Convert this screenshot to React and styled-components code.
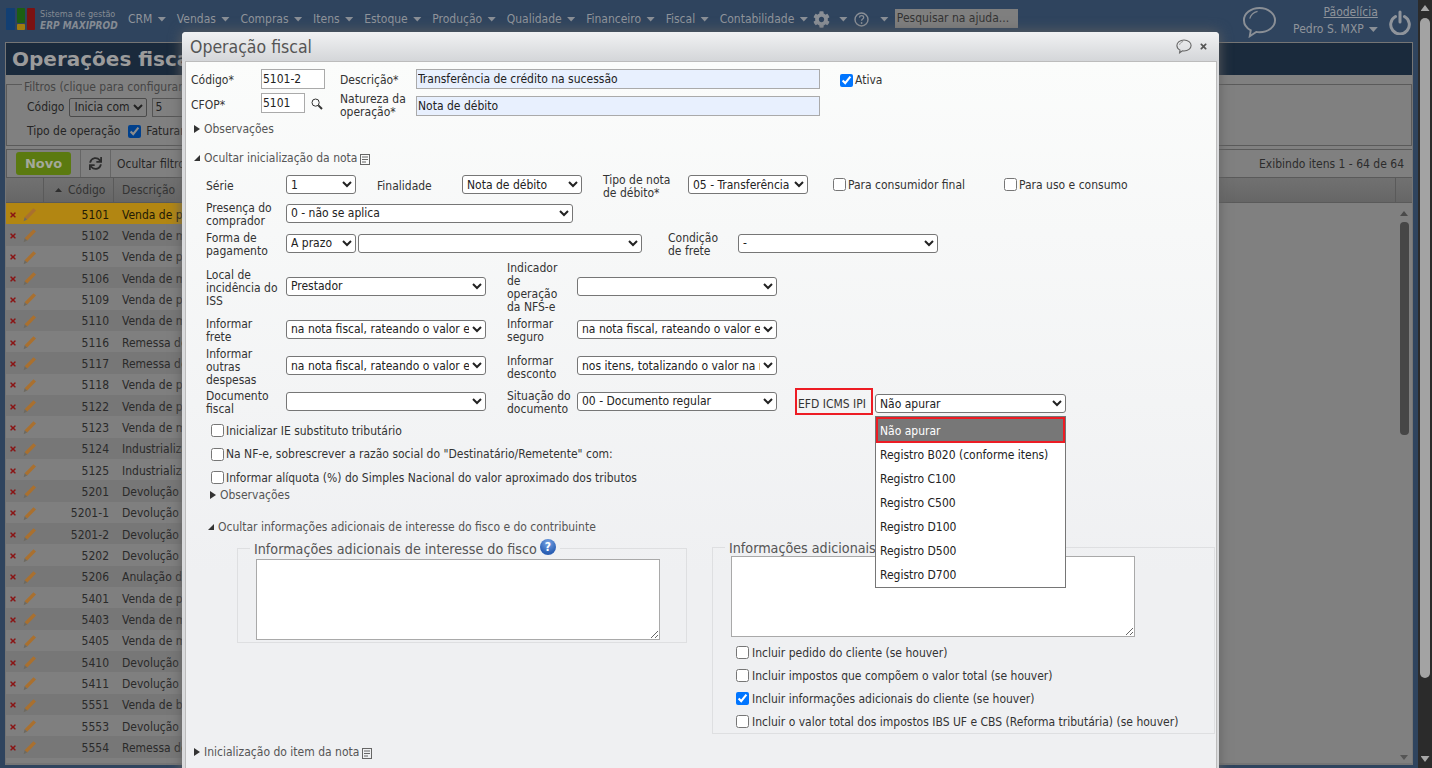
import React from 'react';
import styled, { createGlobalStyle } from 'styled-components';
import { FaCog, FaSync, FaTimes } from 'react-icons/fa';

const GlobalStyle = createGlobalStyle`
  html, body {
    margin: 0;
    height: 100%;
    overflow: hidden;
    background: #2f445e;
  }
  * { box-sizing: border-box; }
  body, input, select, textarea {
    font-family: "DejaVu Sans Condensed", "DejaVu Sans", sans-serif;
    font-stretch: condensed;
    font-size: 12px;
  }
`;

const Shell = styled.div`
  position: relative;
  width: 1432px;
  height: 768px;
  overflow: hidden;
  display: flex;
`;

const Main = styled.div`
  width: 1418px;
  display: flex;
  flex-direction: column;
`;

const PageScroll = styled.div`
  width: 14px;
  background: #2b2b2b;
  display: flex;
  flex-direction: column;
  align-items: center;
  padding: 5px 0 6px;
  .thumb {
    width: 10px;
    height: 660px;
    margin-top: 7px;
    border-radius: 5px;
    background: #a3a3a3;
  }
  .gap { flex: 1; }
`;

const Tri = styled.i`
  display: block;
  width: ${p => p.$w || 9}px;
  height: ${p => p.$h || 5}px;
  margin-left: ${p => p.$ml || 0}px;
  background: ${p => p.$c || '#8a8f96'};
  clip-path: ${p => (p.$up ? 'polygon(50% 0, 100% 100%, 0 100%)' : 'polygon(0 0, 100% 0, 50% 100%)')};
`;

/* top bar */
const Nav = styled.div`
  height: 42px;
  flex: none;
  display: flex;
  align-items: flex-start;
  color: #8f949b;
`;

const Brand = styled.div`
  width: 128px;
  height: 38px;
  padding: 8px 0 0 6px;
  display: flex;
  gap: 4px;
  flex: none;
`;

const BrandText = styled.div`
  color: #858b93;
  font-size: 9px;
  line-height: 12px;
  b {
    display: block;
    font-size: 10px;
    font-weight: 700;
    font-style: italic;
  }
`;

const MenuItem = styled.div`
  height: 38px;
  display: flex;
  align-items: center;
  gap: 5px;
  margin-left: ${p => p.$ml || 0}px;
  margin-right: ${p => p.$mr ?? 10.5}px;
`;

const HelpSearch = styled.div`
  width: 123px;
  height: 19px;
  margin: 9px 0 0 6px;
  padding: 0 2px;
  background: #7f7f7f;
  color: #333;
  line-height: 19px;
`;

const ChatSlot = styled.div`
  margin: 6px 0 0 224px;
`;

const UserBox = styled.div`
  margin: 4px 0 0 15px;
  width: 86px;
  text-align: right;
  line-height: 17px;
  white-space: nowrap;
  a { text-decoration: underline; color: #8f949b; display: block; }
  span { display: inline-flex; align-items: center; gap: 5px; }
`;

const PowerSlot = styled.div`
  margin: 10px 0 0 11px;
`;

/* page behind the dialog */
const Panel = styled.div`
  margin: 0 0 0 5px;
  width: 1408px;
  height: 723px;
  border: 1px solid #757575;
  border-bottom-width: 2px;
  background: #808080;
  display: flex;
  flex-direction: column;
  color: #252525;
`;

const PageTitle = styled.div`
  height: 32px;
  flex: none;
  background: #1a2a3c;
  color: #9b9b9b;
  padding-left: 6px;
  font-family: "DejaVu Sans", sans-serif;
  font-stretch: normal;
  font-size: 20px;
  font-weight: 700;
  line-height: 32px;
  white-space: nowrap;
`;

const FilterSet = styled.fieldset`
  margin: 3px 0 0;
  height: 68px;
  flex: none;
  padding: 4px 0 0 20px;
  border: 1px solid #5a5a5a;
  legend {
    margin-left: -5px;
    padding: 0 2px;
    line-height: 13px;
    color: #454545;
    transform: translateY(3px);
  }
`;

const FilterRow = styled.div`
  display: flex;
  align-items: center;
  gap: 5px;
  height: 24px;
  white-space: nowrap;
  input[type='checkbox'] { filter: brightness(0.55); margin: 0 0 0 3px; }
`;

const DimSelect = styled.select`
  width: ${p => p.$w}px;
  height: 19px;
  border: 1px solid #4a4a4a;
  border-radius: 2px;
  background: #808080;
  color: #222;
  padding: 0;
`;

const DimInput = styled.input`
  width: 80px;
  height: 19px;
  border: 1px solid #555;
  background: #808080;
  color: #222;
  padding: 0 2px;
`;

const Toolbar = styled.div`
  height: 28px;
  flex: none;
  margin-top: 3px;
  border-top: 1px solid #5a5a5a;
  border-left: 1px solid #5a5a5a;
  display: flex;
  align-items: center;
  padding: 0 8px 0 9px;
  white-space: nowrap;
`;

const NewButton = styled.div`
  width: 55px;
  height: 23px;
  border-radius: 3px;
  background: #5b7a10;
  color: #a3a99a;
  font-family: "DejaVu Sans", sans-serif;
  font-stretch: normal;
  font-size: 13px;
  font-weight: 700;
  line-height: 23px;
  text-align: center;
`;

const ToolSep = styled.div`
  width: 1px;
  height: 27px;
  background: #666;
  margin: ${p => p.$m};
`;

const Showing = styled.div`
  margin-left: auto;
  color: #2c2c2c;
`;

const HeadRow = styled.div`
  height: 26px;
  flex: none;
  display: grid;
  grid-template-columns: 38px 70px 1fr 16px;
  border-top: 1px solid #5a5a5a;
  border-bottom: 1px solid #5a5a5a;
  background: linear-gradient(#717171, #666);
  color: #333;
  line-height: 24px;
`;

const HeadCell = styled.div`
  display: flex;
  align-items: center;
  gap: 6px;
  padding-left: ${p => p.$pad || 0}px;
  border-right: 1px solid #5a5a5a;
  &:last-child { border-right: 0; }
`;

const Body = styled.div`
  flex: 1;
  min-height: 0;
  display: flex;
  overflow: hidden;
`;

const Rows = styled.div`
  width: 1000px;
  height: 100%;
  flex: none;
  overflow: hidden;
  background: linear-gradient(90deg, transparent 38px, #6a6a6a 38px, #6a6a6a 39px, transparent 39px, transparent 108px, #6a6a6a 108px, #6a6a6a 109px, transparent 109px);
`;

const Row = styled.div`
  height: 21.33px;
  padding-top: 2px;
  display: grid;
  grid-template-columns: 38px 70px 1fr;
  align-items: center;
  background: ${p => (p.$active ? '#b28612' : p.$odd ? '#777' : '#7f7f7f')};
  color: ${p => (p.$active ? '#221a05' : '#2a2a2a')};
  white-space: nowrap;
`;

const RowTools = styled.div`
  display: flex;
  align-items: center;
  gap: 6px;
  padding-left: 3px;
  color: #8a1414;
`;

const CodeCell = styled.div`
  text-align: right;
  padding-right: 5px;
`;

const DescCell = styled.div`
  padding-left: 8px;
`;

const TableScroll = styled.div`
  margin-left: auto;
  width: 14px;
  display: flex;
  flex-direction: column;
  align-items: center;
  padding: 8px 2px 3px 0;
  .thumb {
    width: 9px;
    height: 213px;
    margin-top: 6px;
    border-radius: 4px;
    background: #464646;
  }
  .gap { flex: 1; }
`;

/* dialog */
const Modal = styled.div`
  position: absolute;
  left: 182px;
  top: 32px;
  width: 1037px;
  height: 760px;
  border-radius: 4px 4px 0 0;
  background: #d9dadc;
  box-shadow: 0 0 13px #606060;
  display: flex;
  flex-direction: column;
  padding: 0 2px 0 3px;
`;

const ModalHead = styled.div`
  height: 29px;
  flex: none;
  margin: 0 -2px 0 -3px;
  padding: 0 11px 0 8px;
  border-radius: 4px 4px 0 0;
  background: linear-gradient(#f1f2f3, #d4d6d9);
  display: flex;
  align-items: center;
  justify-content: space-between;
  color: #555;
  font-size: 17.5px;
`;

const HeadTools = styled.div`
  display: flex;
  align-items: center;
  gap: 7px;
  color: #555;
`;

const ModalBody = styled.div`
  flex: 1;
  border: 1px solid #bcbcbc;
  background: linear-gradient(#fbfcfb 0, #eff0f2 70%);
  padding: 5px 0 0 5px;
  color: #333;
`;

const TopRow = styled.div`
  height: 24px;
  margin-bottom: 1px;
  display: flex;
  align-items: center;
`;

const Lbl = styled.label`
  width: ${p => p.$w}px;
  flex: none;
  margin-left: ${p => p.$ml || 0}px;
  margin-right: ${p => p.$mr || 0}px;
  line-height: 13px;
  padding-top: ${p => p.$pt ?? 4}px;
  color: #333;
`;

const TextField = styled.input`
  width: ${p => p.$w}px;
  height: 20px;
  flex: none;
  margin-top: ${p => p.$mt || 0}px;
  border: 1px solid #aaa;
  border-radius: 0;
  background: ${p => (p.$auto ? '#e8f0fe' : '#fff')};
  color: #222;
  padding: 0 1px;
  outline: none;
`;

const LensIcon = styled.svg`
  margin-left: 6px;
  flex: none;
`;

const DocGlyph = styled.svg`
  margin: 2px 0 0 -1px;
`;

const Toggle = styled.div`
  height: 16px;
  display: flex;
  align-items: center;
  gap: 4px;
  margin: ${p => p.$m || '0'};
  color: #555;
  white-space: nowrap;
`;

const Arrow = styled.i`
  display: block;
  width: 6px;
  height: ${p => (p.$open ? 6 : 8)}px;
  background: #333;
  clip-path: ${p => (p.$open ? 'polygon(100% 0, 100% 100%, 0 100%)' : 'polygon(0 0, 100% 50%, 0 100%)')};
`;

const FormGrid = styled.div`
  margin: 7px 0 0 15px;
  display: flex;
  flex-direction: column;
  gap: 4px;
`;

const FormRow = styled.div`
  height: ${p => p.$h}px;
  display: flex;
  align-items: center;
`;

const Sel = styled.select`
  width: ${p => p.$w}px;
  height: 19px;
  flex: none;
  margin-left: ${p => p.$ml || 0}px;
  margin-top: ${p => p.$mt || 0}px;
  border: 1px solid #767676;
  border-radius: 3px;
  background: #fff;
  color: #222;
  padding: 0;
`;

const Check = styled.label`
  display: flex;
  align-items: center;
  height: ${p => p.$h || 23}px;
  margin-left: ${p => p.$ml || 0}px;
  margin-top: ${p => p.$mt || 0}px;
  color: #333;
  white-space: nowrap;
  input { margin: 0 2px 0 0; width: 13px; height: 13px; flex: none; }
`;

const CheckGroup = styled.div`
  margin: 6px 0 0 20px;
`;

const Highlight = styled.div`
  flex: none;
  width: 78px;
  height: 27px;
  margin-left: 18px;
  border: 2px solid #ed1c24;
  padding: 4px 0 0 1px;
  line-height: 20px;
  white-space: nowrap;
  color: #333;
`;

const DropWrap = styled.div`
  position: relative;
  margin-left: 2px;
  display: flex;
`;

const DropList = styled.div`
  position: absolute;
  z-index: 3;
  top: 27px;
  left: 0;
  width: 191px;
  border: 1px solid #767676;
  background: #fff;
  color: #222;
`;

const DropOption = styled.div`
  height: ${p => (p.$sel ? 26 : 24)}px;
  line-height: 24px;
  padding-left: ${p => (p.$sel ? 2 : 4)}px;
  white-space: nowrap;
  ${p => p.$sel && 'background: #777; color: #fff; border: 2px solid #ed1c24;'}
`;

const InfoRow = styled.div`
  margin: 3px 0 0 46px;
  display: flex;
  align-items: flex-start;
  gap: 25px;
`;

const InfoSet = styled.fieldset`
  width: ${p => p.$w}px;
  flex: none;
  margin: ${p => p.$mt || 0}px 0 0;
  padding: 0 0 ${p => p.$pb || 0}px 18px;
  border: 1px solid #dedfe1;
  min-width: 0;
  legend {
    margin-left: -6px;
    padding: 0 4px;
    height: ${p => p.$lh}px;
    display: flex;
    align-items: center;
    gap: 3px;
    font-size: 14.2px;
    color: #555;
    white-space: nowrap;
  }
`;

const Area = styled.textarea`
  display: block;
  width: 404px;
  height: 81px;
  border: 1px solid #a9a9a9;
  border-radius: 0;
  background: #fff;
  outline: none;
`;

const HelpBadge = styled.span`
  width: 16px;
  height: 16px;
  border-radius: 50%;
  background: radial-gradient(circle at 50% 25%, #7aa6e6, #2a5fb4 70%);
  color: #fff;
  font-size: 12px;
  font-weight: 700;
  line-height: 16px;
  text-align: center;
  margin-top: -3px;
`;

const ExtraChecks = styled.div`
  margin: 4px 0 0 5px;
  display: flex;
  flex-direction: column;
  input { margin-right: 3px; }
`;

const Logo = () => (
  <svg width="30" height="22" viewBox="0 0 30 22">
    <rect x="0" y="0" width="9" height="22" rx="1" fill="#123f73" />
    <rect x="11" y="0" width="8" height="15" rx="1" fill="#1c5e12" />
    <rect x="11" y="16" width="8" height="6" rx="1" fill="#a07c10" />
    <rect x="21" y="0" width="8" height="22" rx="1" fill="#7c1212" />
  </svg>
);

const Bubble = ({ size = 35, color = '#8a8f96', sw = 2 }) => (
  <svg width={size} height={size * 0.92} viewBox="0 0 36 33" fill="none" stroke={color} strokeWidth={sw}>
    <path d="M18 2C9 2 2 7.6 2 14.6c0 4.4 3 8.2 7 10.4l-1 6 6.6-4.4c1.1.2 2.2.3 3.4.3 9 0 16-5.5 16-12.3S27 2 18 2z" />
    <path d="M8 13c1-4 4-6.5 8-7.5" strokeWidth={sw * 0.6} />
  </svg>
);

const HelpMark = () => (
  <svg width="15" height="15" viewBox="0 0 15 15">
    <circle cx="7.5" cy="7.5" r="6.5" fill="none" stroke="#8a8f96" strokeWidth="1.4" />
    <path d="M5.4 5.6c.2-1.3 1.1-1.9 2.2-1.9 1.2 0 2.1.7 2.1 1.8 0 1.6-2.1 1.6-2.1 3.2" fill="none" stroke="#8a8f96" strokeWidth="1.3" />
    <circle cx="7.6" cy="11" r=".9" fill="#8a8f96" />
  </svg>
);

const Power = () => (
  <svg width="22" height="25" viewBox="0 0 22 25" fill="none" stroke="#8f949b" strokeWidth="3" strokeLinecap="round">
    <path d="M6.5 6.5a9.3 9.3 0 1 0 9 0" />
    <path d="M11 2v10" />
  </svg>
);

const Lens = () => (
  <LensIcon width="12" height="12" viewBox="0 0 12 12" fill="none" stroke="#333">
    <circle cx="4.6" cy="4.6" r="3.6" />
    <path d="M7.4 7.4 11 11" strokeWidth="2" />
  </LensIcon>
);

const DocIcon = () => (
  <DocGlyph width="10" height="11" viewBox="0 0 10 11" fill="none" stroke="#666">
    <rect x="0.5" y="0.5" width="9" height="10" />
    <path d="M2 3h6M2 5.5h6M2 8h4" />
  </DocGlyph>
);

const Pencil = () => (
  <svg width="14" height="15" viewBox="0 0 14 15">
    <path d="M10.5 1.2 13 3.4 4.2 12.6 1.6 10.2z" fill="#a9702f" />
    <path d="M1.6 10.2 4.2 12.6 0.6 14.2z" fill="#6e6a60" />
  </svg>
);

const MENU = ['CRM', 'Vendas', 'Compras', 'Itens', 'Estoque', 'Produção', 'Qualidade', 'Financeiro', 'Fiscal', 'Contabilidade'];

const ROWS = [
  ['5101', 'Venda de produção do estabelecimento'],
  ['5102', 'Venda de mercadoria adquirida'],
  ['5105', 'Venda de produção do estabelecimento'],
  ['5106', 'Venda de mercadoria adquirida'],
  ['5109', 'Venda de produção do estabelecimento'],
  ['5110', 'Venda de mercadoria adquirida'],
  ['5116', 'Remessa de produção do estabelecimento'],
  ['5117', 'Remessa de mercadoria adquirida'],
  ['5118', 'Venda de produção do estabelecimento'],
  ['5122', 'Venda de produção do estabelecimento'],
  ['5123', 'Venda de mercadoria adquirida'],
  ['5124', 'Industrialização efetuada'],
  ['5125', 'Industrialização efetuada'],
  ['5201', 'Devolução de compra'],
  ['5201-1', 'Devolução de compra'],
  ['5201-2', 'Devolução de compra'],
  ['5202', 'Devolução de compra'],
  ['5206', 'Anulação de valor'],
  ['5401', 'Venda de produção do estabelecimento'],
  ['5403', 'Venda de mercadoria adquirida'],
  ['5405', 'Venda de mercadoria adquirida'],
  ['5410', 'Devolução de compra'],
  ['5411', 'Devolução de compra'],
  ['5551', 'Venda de bem do ativo'],
  ['5553', 'Devolução de compra'],
  ['5554', 'Remessa de bem do ativo'],
  ['5555', 'Devolução de bem'],
];

const OPTIONS = ['Registro B020 (conforme itens)', 'Registro C100', 'Registro C500', 'Registro D100', 'Registro D500', 'Registro D700'];

const RATEIO = 'na nota fiscal, rateando o valor entre os itens';

const Choice = ({ w, ml, mt, value }) => (
  <Sel $w={w} $ml={ml} $mt={mt} defaultValue={value}>
    <option>{value}</option>
  </Sel>
);

const App = () => (
  <Shell>
    <GlobalStyle />
    <Main>
      <Nav>
        <Brand>
          <Logo />
          <BrandText>
            Sistema de gestão
            <b>ERP MAXIPROD</b>
          </BrandText>
        </Brand>
        {MENU.map(item => (
          <MenuItem key={item}>
            {item}
            <Tri />
          </MenuItem>
        ))}
        <MenuItem $ml={-6} $mr={6}>
          <FaCog size={17} color="#8a8f96" />
          <Tri $ml={4} />
        </MenuItem>
        <MenuItem $mr={0}>
          <HelpMark />
          <Tri $ml={6} />
        </MenuItem>
        <HelpSearch>Pesquisar na ajuda...</HelpSearch>
        <ChatSlot>
          <Bubble />
        </ChatSlot>
        <UserBox>
          <a>Pãodelícia</a>
          <span>
            Pedro S. MXP
            <Tri />
          </span>
        </UserBox>
        <PowerSlot>
          <Power />
        </PowerSlot>
      </Nav>
      <Panel>
        <PageTitle>Operações fiscais</PageTitle>
        <FilterSet>
          <legend>Filtros (clique para configurar)</legend>
          <FilterRow>
            Código
            <DimSelect $w={78} defaultValue="Inicia com">
              <option>Inicia com</option>
            </DimSelect>
            <DimInput defaultValue="5" />
          </FilterRow>
          <FilterRow>
            Tipo de operação
            <input type="checkbox" defaultChecked />
            Faturamento
          </FilterRow>
        </FilterSet>
        <Toolbar>
          <NewButton>Novo</NewButton>
          <ToolSep $m="0 8px 0 9px" />
          <FaSync size={13} color="#2c2c2c" />
          <ToolSep $m="0 6px 0 8px" />
          Ocultar filtros
          <Showing>Exibindo itens 1 - 64 de 64</Showing>
        </Toolbar>
        <HeadRow>
          <HeadCell />
          <HeadCell $pad={11}>
            <Tri $up $w={7} $h={4} $c="#2e2e2e" />
            Código
          </HeadCell>
          <HeadCell $pad={8}>Descrição</HeadCell>
          <HeadCell />
        </HeadRow>
        <Body>
          <Rows>
            {ROWS.map((row, i) => (
              <Row key={row[0]} $active={i === 0} $odd={i % 2 === 1}>
                <RowTools>
                  <FaTimes size={8} />
                  <Pencil />
                </RowTools>
                <CodeCell>{row[0]}</CodeCell>
                <DescCell>{row[1]}</DescCell>
              </Row>
            ))}
          </Rows>
          <TableScroll>
            <Tri $up $w={8} $h={5} $c="#4a4a4a" />
            <div className="thumb" />
            <div className="gap" />
            <Tri $w={8} $h={5} $c="#555" />
          </TableScroll>
        </Body>
      </Panel>
    </Main>
    <PageScroll>
      <Tri $up $w={9} $h={6} $c="#a8a8a8" />
      <div className="thumb" />
      <div className="gap" />
      <Tri $w={9} $h={6} $c="#a8a8a8" />
    </PageScroll>

    <Modal>
      <ModalHead>
        Operação fiscal
        <HeadTools>
          <Bubble size={16} color="#666" sw={2.4} />
          <FaTimes size={9} />
        </HeadTools>
      </ModalHead>
      <ModalBody>
        <TopRow>
          <Lbl $w={70} $pt={3}>Código*</Lbl>
          <TextField $w={64} defaultValue="5101-2" />
          <Lbl $w={76} $ml={15} $pt={3}>Descrição*</Lbl>
          <TextField $w={404} $auto defaultValue="Transferência de crédito na sucessão" />
          <Check $ml={20} $mt={2}>
            <input type="checkbox" defaultChecked />
            Ativa
          </Check>
        </TopRow>
        <TopRow>
          <Lbl $w={70} $pt={3}>CFOP*</Lbl>
          <TextField $w={44} $mt={-2} defaultValue="5101" />
          <Lens />
          <Lbl $w={76} $ml={17} $pt={3}>
            Natureza da operação*
          </Lbl>
          <TextField $w={404} $auto $mt={3} defaultValue="Nota de débito" />
        </TopRow>
        <Toggle $m="5px 0 0 3px">
          <Arrow />
          Observações
        </Toggle>
        <Toggle $m="13px 0 0 3px">
          <Arrow $open />
          Ocultar inicialização da nota
          <DocIcon />
        </Toggle>
        <FormGrid>
          <FormRow $h={23}>
            <Lbl $w={72} $mr={8}>Série</Lbl>
            <Choice w={70} value="1" />
            <Lbl $w={85} $ml={21}>Finalidade</Lbl>
            <Choice w={120} value="Nota de débito" />
            <Lbl $w={72} $ml={21} $mr={13}>
              Tipo de nota de débito*
            </Lbl>
            <Choice w={120} value="05 - Transferência" />
            <Check $ml={25}>
              <input type="checkbox" />
              Para consumidor final
            </Check>
            <Check $ml={39}>
              <input type="checkbox" />
              Para uso e consumo
            </Check>
          </FormRow>
          <FormRow $h={26}>
            <Lbl $w={72} $mr={8}>Presença do comprador</Lbl>
            <Choice w={287} value="0 - não se aplica" />
          </FormRow>
          <FormRow $h={26}>
            <Lbl $w={72} $mr={8}>Forma de pagamento</Lbl>
            <Choice w={70} value="A prazo" />
            <Choice w={284} ml={2} value="" />
            <Lbl $w={52} $ml={26} $mr={18}>
              Condição de frete
            </Lbl>
            <Choice w={200} value="-" />
          </FormRow>
          <FormRow $h={52}>
            <Lbl $w={72} $mr={8}>Local de incidência do ISS</Lbl>
            <Choice w={200} value="Prestador" />
            <Lbl $w={64} $ml={21} $mr={6}>
              Indicador de operação da NFS-e
            </Lbl>
            <Choice w={200} value="" />
          </FormRow>
          <FormRow $h={26}>
            <Lbl $w={72} $mr={8}>Informar frete</Lbl>
            <Choice w={200} value={RATEIO} />
            <Lbl $w={64} $ml={21} $mr={6}>
              Informar seguro
            </Lbl>
            <Choice w={200} value={RATEIO} />
          </FormRow>
          <FormRow $h={39}>
            <Lbl $w={72} $mr={8}>Informar outras despesas</Lbl>
            <Choice w={200} value={RATEIO} />
            <Lbl $w={64} $ml={21} $mr={6}>
              Informar desconto
            </Lbl>
            <Choice w={200} value="nos itens, totalizando o valor na nota" />
          </FormRow>
          <FormRow $h={24}>
            <Lbl $w={72} $mr={8}>Documento fiscal</Lbl>
            <Choice w={200} value="" />
            <Lbl $w={64} $ml={21} $mr={6}>
              Situação do documento
            </Lbl>
            <Choice w={200} value="00 - Documento regular" />
            <Highlight>EFD ICMS IPI</Highlight>
            <DropWrap>
              <Choice w={191} mt={5} value="Não apurar" />
              <DropList>
                <DropOption $sel>Não apurar</DropOption>
                {OPTIONS.map(opt => (
                  <DropOption key={opt}>{opt}</DropOption>
                ))}
              </DropList>
            </DropWrap>
          </FormRow>
        </FormGrid>
        <CheckGroup>
          <Check>
            <input type="checkbox" />
            Inicializar IE substituto tributário
          </Check>
          <Check $h={24}>
            <input type="checkbox" />
            Na NF-e, sobrescrever a razão social do "Destinatário/Remetente" com:
          </Check>
          <Check>
            <input type="checkbox" />
            Informar alíquota (%) do Simples Nacional do valor aproximado dos tributos
          </Check>
        </CheckGroup>
        <Toggle $m="-2px 0 0 19px">
          <Arrow />
          Observações
        </Toggle>
        <Toggle $m="16px 0 0 17px">
          <Arrow $open />
          Ocultar informações adicionais de interesse do fisco e do contribuinte
        </Toggle>
        <InfoRow>
          <InfoSet $w={450} $lh={21} $pb={2}>
            <legend>
              Informações adicionais de interesse do fisco
              <HelpBadge>?</HelpBadge>
            </legend>
            <Area />
          </InfoSet>
          <InfoSet $w={503} $lh={17} $mt={1}>
            <legend>Informações adicionais de interesse do contribuinte</legend>
            <Area />
            <ExtraChecks>
              <Check>
                <input type="checkbox" />
                Incluir pedido do cliente (se houver)
              </Check>
              <Check>
                <input type="checkbox" />
                Incluir impostos que compõem o valor total (se houver)
              </Check>
              <Check>
                <input type="checkbox" defaultChecked />
                Incluir informações adicionais do cliente (se houver)
              </Check>
              <Check>
                <input type="checkbox" />
                Incluir o valor total dos impostos IBS UF e CBS (Reforma tributária) (se houver)
              </Check>
            </ExtraChecks>
          </InfoSet>
        </InfoRow>
        <Toggle $m="10px 0 0 3px">
          <Arrow />
          Inicialização do item da nota
          <DocIcon />
        </Toggle>
      </ModalBody>
    </Modal>
  </Shell>
);

export default App;
